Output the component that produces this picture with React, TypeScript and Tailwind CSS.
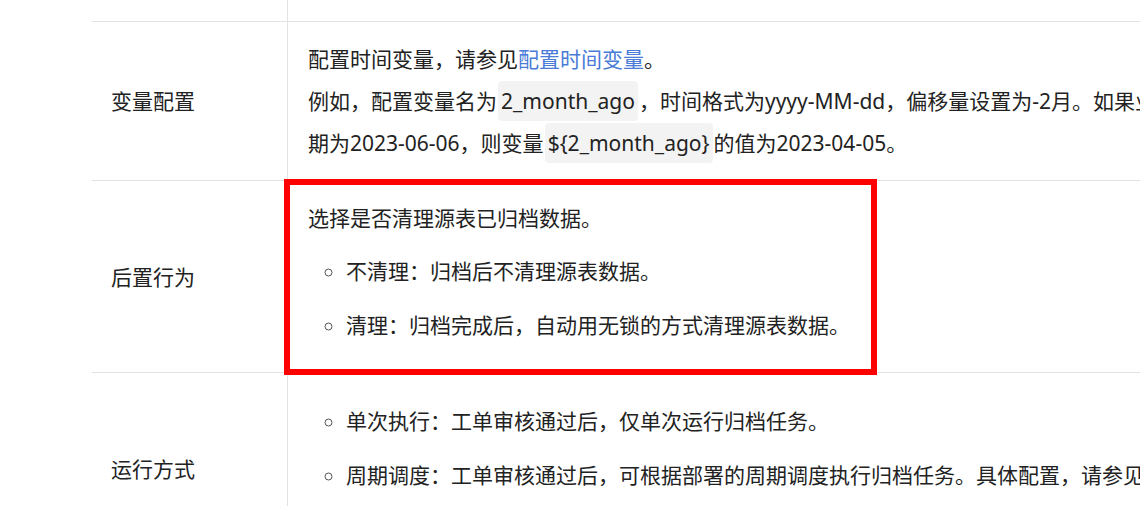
import React from "react";

const Code = ({ children }: { children: React.ReactNode }) => (
  <span className="mx-[1px] rounded-[4px] bg-[#f3f3f3] px-[3px] py-[6px]">{children}</span>
);

export default function App() {
  return (
    <div
      className="h-[506px] w-[1140px] overflow-hidden bg-white text-[21px] leading-[42px] text-[#222222]"
      style={{ fontFamily: '"Noto Sans", "Noto Sans CJK SC", sans-serif' }}
    >
      <div className="ml-[92px] w-[1200px]">
        {/* tail of previous row */}
        <div className="grid h-[22px] grid-cols-[195px_1fr] border-b border-[#e3e3e3]">
          <div />
          <div className="border-l border-[#e3e3e3]" />
        </div>

        {/* 变量配置 */}
        <div className="grid grid-cols-[195px_1fr] border-b border-[#e3e3e3]">
          <div className="flex items-center pl-[19px]">变量配置</div>
          <div className="border-l border-[#e3e3e3] px-[20px] py-[16px]">
            <div className="w-[960px]">
              <p>
                配置时间变量，请参见<span className="text-[#4a7bd6]">配置时间变量</span>。
              </p>
              <p>
                例如，配置变量名为<Code>2_month_ago</Code>，时间格式为yyyy-MM-dd，偏移量设置为-2月。如果业务日
                <br />
                期为2023-06-06，则变量<Code>{"${2_month_ago}"}</Code>的值为2023-04-05。
              </p>
            </div>
          </div>
        </div>

        {/* 后置行为 */}
        <div className="relative grid grid-cols-[195px_1fr] border-b border-[#e3e3e3]">
          <div className="flex items-center pl-[19px]">后置行为</div>
          <div className="border-l border-[#e3e3e3] px-[20px] pt-[16px] pb-[20px]">
            <p>选择是否清理源表已归档数据。</p>
            <ul className="mt-[5px] list-[circle] pl-[38px] marker:text-[#555]">
              <li className="py-[6px]">不清理：归档后不清理源表数据。</li>
              <li className="py-[6px]">清理：归档完成后，自动用无锁的方式清理源表数据。</li>
            </ul>
          </div>
          <div className="pointer-events-none absolute left-[192px] top-[-2px] h-[196px] w-[593px] border-[6px] border-[#ff0000]" />
        </div>

        {/* 运行方式 */}
        <div className="grid grid-cols-[195px_1fr] border-b border-[#e3e3e3]">
          <div className="flex items-center pl-[19px]">运行方式</div>
          <div className="border-l border-[#e3e3e3] px-[20px] pt-[21px] pb-[21px]">
            <ul className="w-[960px] list-[circle] pl-[38px] marker:text-[#555]">
              <li className="py-[6px]">单次执行：工单审核通过后，仅单次运行归档任务。</li>
              <li className="py-[6px]">
                周期调度：工单审核通过后，可根据部署的周期调度执行归档任务。具体配置，请参见
                <br />
                <span className="text-[#4a7bd6]">配置周期调度</span>。
              </li>
            </ul>
          </div>
        </div>
      </div>
    </div>
  );
}
